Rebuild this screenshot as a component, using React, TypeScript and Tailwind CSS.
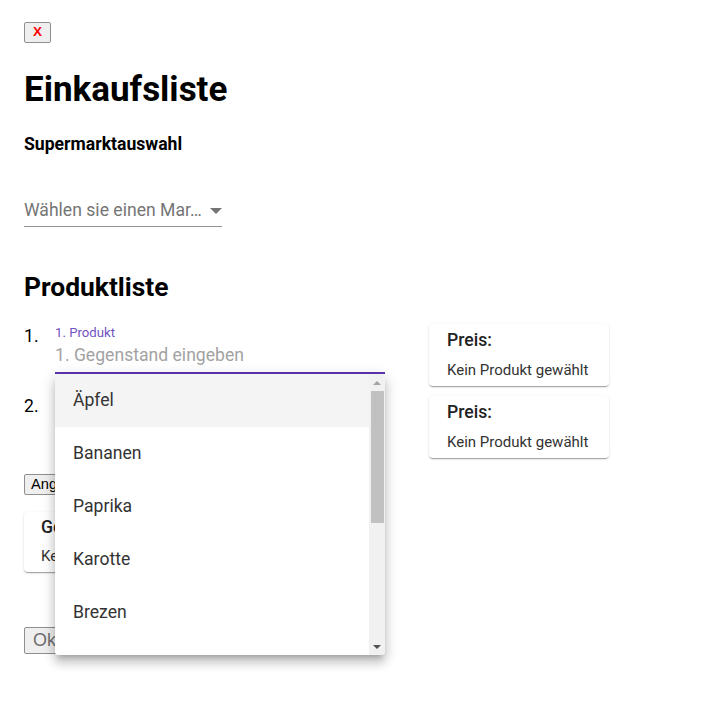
import React from "react";

const items = ["Äpfel", "Bananen", "Paprika", "Karotte", "Brezen", "Milch", "Käse", "Butter", "Eier", "Brot"];

const cardShadow =
  "shadow-[0_2px_1px_-1px_rgba(0,0,0,0.2),0_1px_1px_0_rgba(0,0,0,0.14),0_1px_3px_0_rgba(0,0,0,0.12)]";

function PriceCard({ title, className = "" }: { title: string; className?: string }) {
  return (
    <div
      className={
        "w-[180px] h-[62px] rounded-[4px] bg-white px-[18px] pt-[6px] " + cardShadow + " " + className
      }
    >
      <div className="text-[17.6px] leading-[21px] font-medium text-[#222]">{title}</div>
      <div className="mt-[10px] whitespace-nowrap text-[15px] leading-[18px] text-[#333]">Kein Produkt gewählt</div>
    </div>
  );
}

export default function App() {
  return (
    <div className="min-h-[708px] bg-white pl-[24px] pt-[22px] font-['Roboto',sans-serif] text-black">
      <button className="flex h-[21px] w-[27px] items-center justify-center rounded-[2px] border border-[#8f8f8f] bg-[#efefef] font-['Liberation_Sans',Arial,sans-serif] text-[13.5px] font-bold text-[#ff0000]">
        X
      </button>

      <h1 className="mt-[26px] text-[35px] leading-[41px] font-bold">Einkaufsliste</h1>
      <h4 className="mt-[24px] text-[17.6px] leading-[21px] font-bold">Supermarktauswahl</h4>

      <div className="mt-[45px] flex w-[198px] items-center justify-between border-b border-[#949494] pb-[5px]">
        <span className="text-[17.6px] leading-[21px] text-[#757575]">Wählen sie einen Mar…</span>
        <svg width="12" height="6" viewBox="0 0 10 5">
          <path d="M0 0 L10 0 L5 5 Z" fill="#757575" />
        </svg>
      </div>

      <h2 className="mt-[45px] text-[26.4px] leading-[31px] font-bold">Produktliste</h2>

      <ol className="mt-[21px]">
        <li className="flex items-start">
          <span className="w-[31px] pt-[2px] text-[17.6px] leading-[21px]">1.</span>
          <div className="relative w-[330px]">
            <div className="absolute left-0 top-[1px] text-[13.2px] leading-[15px] text-[#7352c2]">1. Produkt</div>
            <div className="border-b-2 border-[#5e35b1] pt-[21px] pb-[6px] text-[17.6px] leading-[21px] text-[#a2a2a2]">
              1. Gegenstand eingeben
            </div>
            <div className="absolute left-0 top-full z-10 flex h-[281px] w-[330px] overflow-hidden rounded-[4px] bg-white shadow-[0_5px_5px_-3px_rgba(0,0,0,0.2),0_8px_10px_1px_rgba(0,0,0,0.14),0_3px_14px_2px_rgba(0,0,0,0.12)]">
              <div className="flex-1 overflow-hidden">
                {items.map((it, i) => (
                  <div
                    key={it}
                    className={
                      "flex h-[53px] items-center pl-[18px] text-[17.6px] text-[#333] " +
                      (i === 0 ? "bg-[#f4f4f4]" : "bg-white")
                    }
                  >
                    {it}
                  </div>
                ))}
              </div>
              <div className="flex w-[16px] flex-col items-center bg-[#f1f1f1]">
                <div className="flex h-[17px] items-center justify-center">
                  <svg width="8" height="4" viewBox="0 0 8 4">
                    <path d="M0 4 L8 4 L4 0 Z" fill="#a3a3a3" />
                  </svg>
                </div>
                <div className="h-[132px] w-[13px] bg-[#c1c1c1]" />
                <div className="flex-1" />
                <div className="flex h-[17px] items-center justify-center">
                  <svg width="8" height="4" viewBox="0 0 8 4">
                    <path d="M0 0 L8 0 L4 4 Z" fill="#505050" />
                  </svg>
                </div>
              </div>
            </div>
          </div>
          <PriceCard title="Preis:" className="ml-[44px]" />
        </li>
        <li className="mt-[10px] flex items-start">
          <span className="w-[31px] pt-0 text-[17.6px] leading-[21px]">2.</span>
          <div className="w-[330px]">
            <div className="border-b border-[#949494] pt-[21px] pb-[6px] text-[17.6px] leading-[21px] text-[#a2a2a2]">
              2. Gegenstand eingeben
            </div>
          </div>
          <PriceCard title="Preis:" className="ml-[44px]" />
        </li>
      </ol>

      <button className="mt-[16px] block h-[21px] whitespace-nowrap rounded-[2px] border border-[#8f8f8f] bg-[#efefef] px-[6px] font-['Liberation_Sans',Arial,sans-serif] text-[14.67px] leading-[17px] text-black">
        Angebote vergleichen
      </button>

      <div className={"mt-[17px] h-[60px] w-[180px] rounded-[4px] bg-white px-[17px] pt-[5px] " + cardShadow}>
        <div className="text-[17.6px] leading-[21px] font-medium text-[#222]">Gesamtpreis:</div>
        <div className="mt-[9px] whitespace-nowrap text-[15px] leading-[18px] text-[#333]">Kein Produkt gewählt</div>
      </div>

      <button className="mt-[55px] block h-[27px] whitespace-nowrap rounded-[2px] border border-[#8f8f8f] bg-[#efefef] px-[8px] font-['Liberation_Sans',Arial,sans-serif] text-[18px] leading-[21px] text-[#707070]">
        Okay
      </button>
    </div>
  );
}
